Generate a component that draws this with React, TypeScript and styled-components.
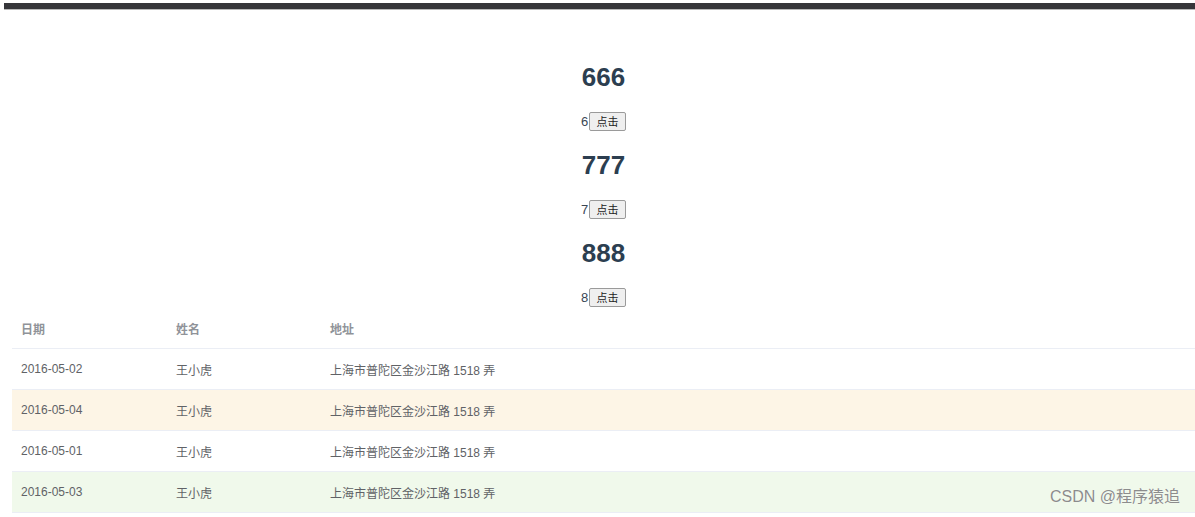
import React, { useState } from "react";
import styled, { createGlobalStyle } from "styled-components";

const GlobalStyle = createGlobalStyle`
  html, body {
    margin: 0;
    padding: 0;
    background: #ffffff;
  }
  body {
    font-family: "Liberation Sans", Arial, "Noto Sans CJK SC", sans-serif;
  }
`;

const Page = styled.div`
  position: relative;
  width: 1195px;
  height: 517px;
  overflow: hidden;
  padding-top: 3px;
  box-sizing: border-box;
`;

const TopBar = styled.div`
  margin-left: 4px;
  height: 6px;
  background: #36363a;
  border-bottom: 1px solid #b8b8b8;
`;

const Counters = styled.div`
  display: flex;
  flex-direction: column;
  align-items: center;
  padding-top: 52px;
  padding-left: 12px;
  color: #2c3e50;
`;

const Title = styled.h1`
  margin: 0;
  height: 30px;
  line-height: 30px;
  font-size: 26px;
  font-weight: 700;
  color: #2c3e50;
`;

const Line = styled.p`
  margin: 19px 0;
  height: 20px;
  display: flex;
  align-items: center;
  font-size: 13px;
  color: #3a4654;
`;

const ClickButton = styled.button`
  height: 19px;
  width: 37px;
  padding: 0;
  margin-left: 1px;
  font-family: "Liberation Sans", "Noto Sans CJK SC", sans-serif;
  font-size: 11px;
  color: #222;
  background: #efefef;
  border: 1px solid #9a9a9a;
  border-radius: 2px;
`;

const Table = styled.div`
  margin-left: 12px;
  margin-top: -18px;
  font-size: 12px;
`;

const Row = styled.div<{ $bg?: string }>`
  display: grid;
  grid-template-columns: 155px 154px 1fr;
  height: 41px;
  align-items: center;
  border-bottom: 1px solid #ebeef5;
  box-sizing: border-box;
  background: ${(p) => p.$bg || "#ffffff"};
`;

const HeadCell = styled.div`
  padding-left: 9px;
  color: #909399;
  font-weight: 700;
  font-family: "Noto Sans CJK SC", sans-serif;
`;

const Cell = styled.div`
  padding-left: 9px;
  color: #606266;
  font-family: "Liberation Sans", "Noto Sans CJK SC", sans-serif;
`;

const Watermark = styled.div`
  position: absolute;
  right: 15px;
  bottom: 10px;
  font-size: 16px;
  color: #8c8c8c;
  text-shadow: 0 0 1px #ffffff;
  font-family: "Liberation Sans", "Noto Sans CJK SC", sans-serif;
`;

const ROWS = [
  { date: "2016-05-02", bg: "#ffffff" },
  { date: "2016-05-04", bg: "#fdf5e6" },
  { date: "2016-05-01", bg: "#ffffff" },
  { date: "2016-05-03", bg: "#f0f9eb" },
];

export default function App() {
  const [counts, setCounts] = useState([6, 7, 8]);
  const titles = ["666", "777", "888"];

  return (
    <Page>
      <GlobalStyle />
      <TopBar />
      <Counters>
        {titles.map((t, i) => (
          <React.Fragment key={t}>
            <Title>{t}</Title>
            <Line>
              {counts[i]}
              <ClickButton
                onClick={() =>
                  setCounts((prev) => prev.map((c, j) => (j === i ? c + 1 : c)))
                }
              >
                点击
              </ClickButton>
            </Line>
          </React.Fragment>
        ))}
      </Counters>
      <Table>
        <Row>
          <HeadCell>日期</HeadCell>
          <HeadCell>姓名</HeadCell>
          <HeadCell>地址</HeadCell>
        </Row>
        {ROWS.map((r) => (
          <Row key={r.date} $bg={r.bg}>
            <Cell>{r.date}</Cell>
            <Cell>王小虎</Cell>
            <Cell>上海市普陀区金沙江路 1518 弄</Cell>
          </Row>
        ))}
      </Table>
      <Watermark>CSDN @程序猿追</Watermark>
    </Page>
  );
}
